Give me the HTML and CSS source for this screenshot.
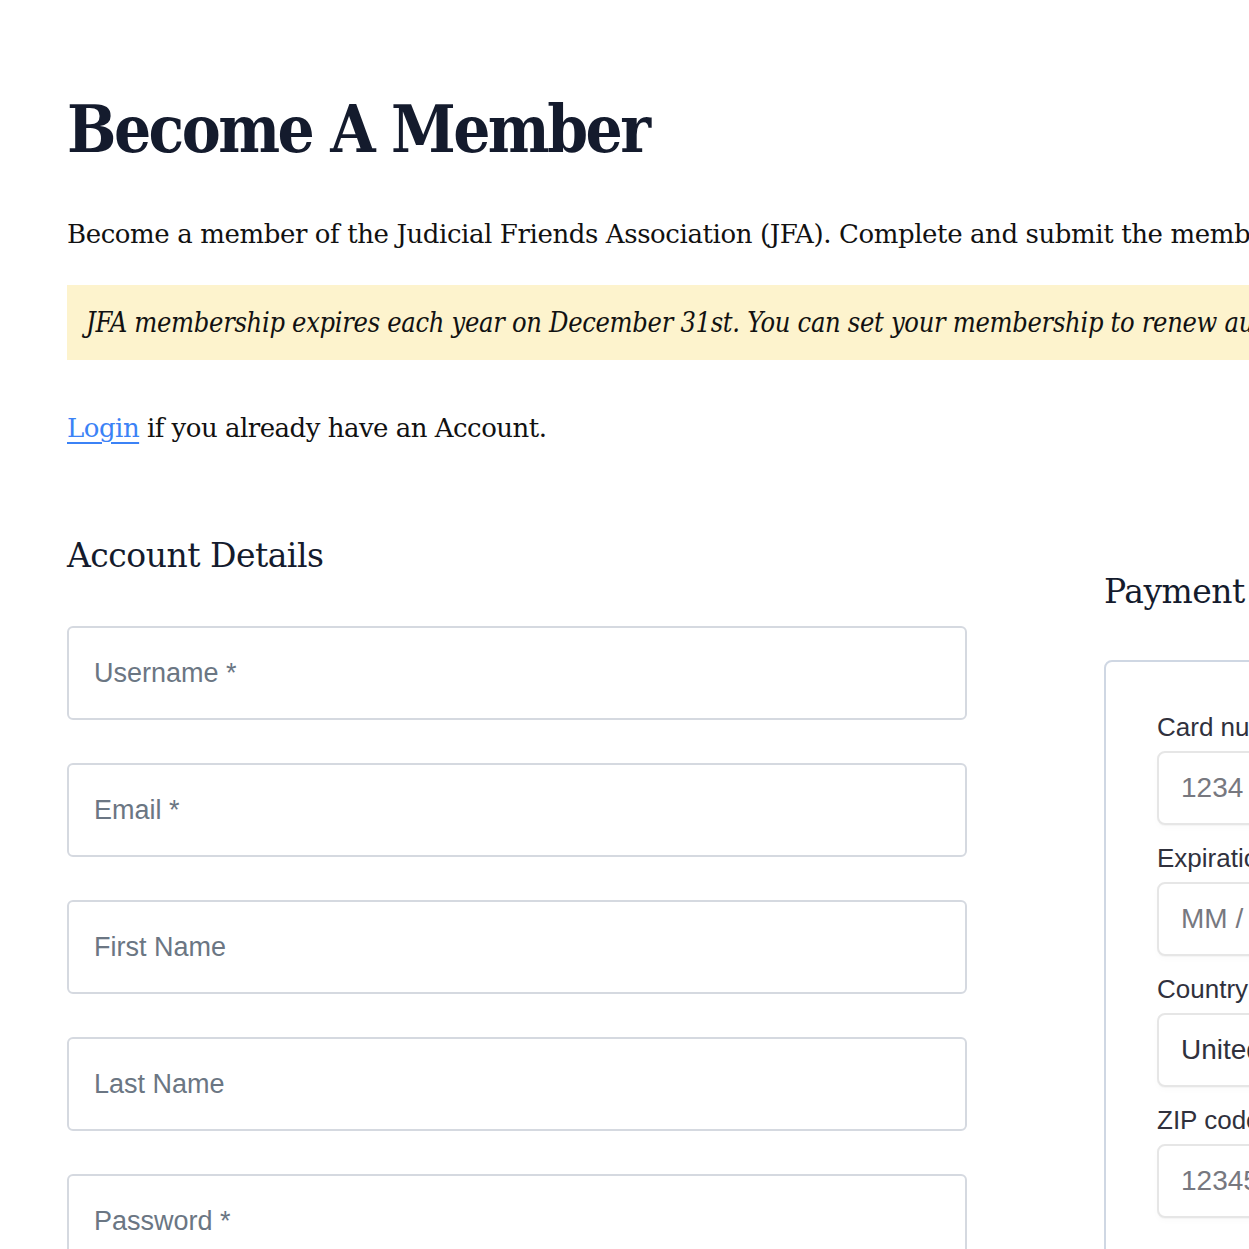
FILE: index.html
```html
<!DOCTYPE html>
<html lang="en">
<head>
<meta charset="utf-8">
<title>Become A Member</title>
<link rel="stylesheet" href="styles.css">
</head>
<body>
<main class="page">
  <h1 class="title">Become A Member</h1>
  <p class="intro">Become a member of the Judicial Friends Association (JFA). Complete and submit the membership form below to join the association and support our mission.</p>
  <div class="notice">JFA membership expires each year on December 31st. You can set your membership to renew automatically each year using the option below.</div>
  <p class="login"><a href="#" class="login-link">Login</a> if you already have an Account.</p>

  <div class="columns">
    <section class="account">
      <h2 class="section-title">Account Details</h2>
      <div class="fields">
        <input class="field" type="text" placeholder="Username *">
        <input class="field" type="email" placeholder="Email *">
        <input class="field" type="text" placeholder="First Name">
        <input class="field" type="text" placeholder="Last Name">
        <input class="field" type="password" placeholder="Password *">
      </div>
    </section>
    <section class="payment">
      <h2 class="section-title payment-title">Payment Details</h2>
      <div class="card">
        <label class="s-label">Card number</label>
        <div class="s-input placeholder">1234 1234 1234 1234</div>
        <label class="s-label">Expiration</label>
        <div class="s-input placeholder">MM / YY</div>
        <label class="s-label">Country</label>
        <div class="s-input">United States</div>
        <label class="s-label">ZIP code</label>
        <div class="s-input placeholder">12345</div>
      </div>
    </section>
  </div>
</main>
</body>
</html>
```

FILE: styles.css
```css
html, body {
  margin: 0;
  padding: 0;
  overflow: hidden;
  background: #ffffff;
}

.page {
  width: 1900px;
  padding: 84px 0 0 67px;
  font-family: "DejaVu Serif", "Liberation Serif", serif;
  color: #111111;
}

.title {
  margin: 0;
  font-family: "DejaVu Serif Condensed", "DejaVu Serif", serif;
  font-size: 65px;
  line-height: 90px;
  font-weight: 700;
  color: #141b2d;
  letter-spacing: -2.5px;
}

.intro {
  margin: 42px 0 0 0;
  font-size: 26px;
  line-height: 36px;
  white-space: nowrap;
  letter-spacing: -0.4px;
  color: #111111;
}

.notice {
  margin-top: 33px;
  height: 75px;
  box-sizing: border-box;
  padding: 0 19px;
  display: flex;
  align-items: center;
  background: #fdf3cd;
  font-family: "DejaVu Serif Condensed", "DejaVu Serif", serif;
  font-style: italic;
  font-size: 27px;
  letter-spacing: -0.3px;
  white-space: nowrap;
  color: #111111;
}

.login {
  margin: 50px 0 0 0;
  font-size: 26px;
  line-height: 36px;
  letter-spacing: -0.5px;
}

.login-link {
  color: #3b82f6;
  text-decoration: underline;
  text-underline-offset: 5px;
  text-decoration-thickness: 2px;
}

.columns {
  display: grid;
  grid-template-columns: 900px 700px;
  column-gap: 137px;
  margin-top: 88px;
}

.section-title {
  margin: 0;
  font-size: 33px;
  line-height: 44px;
  font-weight: 400;
  color: #141b2d;
  letter-spacing: -0.5px;
}

.payment-title {
  margin-top: 36px;
}

.fields {
  display: flex;
  flex-direction: column;
  gap: 43px;
  margin-top: 48px;
}

.field {
  display: block;
  box-sizing: border-box;
  width: 900px;
  height: 94px;
  margin: 0;
  padding: 0 25px;
  border: 2px solid #d5d9e0;
  border-radius: 6px;
  background: #ffffff;
  font-family: "Liberation Sans", Arial, sans-serif;
  font-size: 27px;
  color: #1f2937;
  outline: none;
}

.field::placeholder {
  color: #6b7683;
  opacity: 1;
}

.card {
  margin-top: 46px;
  box-sizing: border-box;
  height: 700px;
  border: 2px solid #cfd7e3;
  border-radius: 8px;
  padding: 50px 0 0 51px;
  display: flex;
  flex-direction: column;
  font-family: "Liberation Sans", Arial, sans-serif;
}

.s-label {
  display: block;
  font-size: 26px;
  line-height: 30px;
  color: #30313d;
  margin-bottom: 9px;
}

.s-input {
  box-sizing: border-box;
  width: 500px;
  height: 74px;
  margin-bottom: 18px;
  padding: 0 22px;
  display: flex;
  align-items: center;
  border: 2px solid #e6e6e6;
  border-radius: 8px;
  background: #ffffff;
  box-shadow: 0 1px 1px rgba(0, 0, 0, 0.03), 0 3px 6px rgba(0, 0, 0, 0.02);
  font-size: 28px;
  color: #30313d;
  white-space: nowrap;
}

.s-input.placeholder {
  color: #77787f;
}
```
